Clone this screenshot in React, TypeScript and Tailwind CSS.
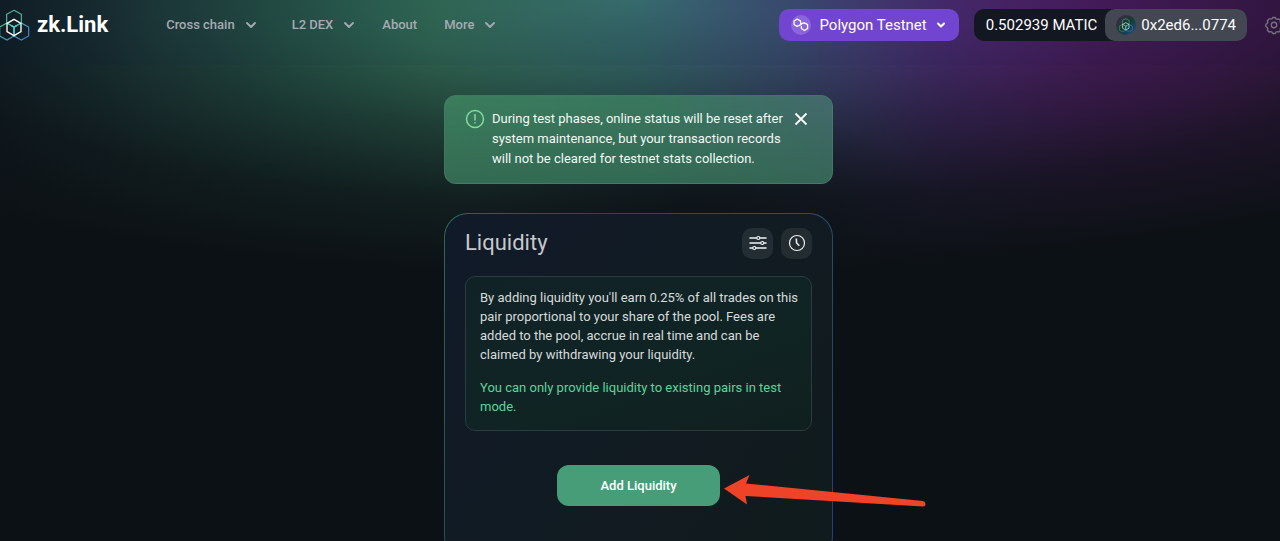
import type { ReactNode } from 'react';
import { ChevronDown } from 'lucide-react';

function LogoMark({ className }: { className: string }) {
  return (
    <svg className={className} viewBox="-3 27 93 97" fill="none" strokeWidth="3.5" aria-hidden="true">
      <defs>
        <linearGradient id="mark" x1="0" y1="30" x2="60" y2="122" gradientUnits="userSpaceOnUse">
          <stop offset="0" stopColor="#4fc08d" />
          <stop offset="0.55" stopColor="#49b99a" />
          <stop offset="1" stopColor="#3f7fd0" />
        </linearGradient>
      </defs>
      <path d="M42 31 64 43V69L42 81 20 69V43Z" stroke="url(#mark)" />
      <path d="M21 69 42 81V108L21 120-1 108V81Z" stroke="url(#mark)" />
      <path d="M64 69 86 81V108L64 120 42 108V81Z" stroke="url(#mark)" />
      <path d="M42 58 63 70V95L42 107 21 95V70Z" stroke="#fff" strokeWidth="4" />
      <path d="M42 103V82L33 76M42 82 51 76" stroke="#4fd0c0" strokeWidth="4" />
    </svg>
  );
}

function PolygonIcon() {
  return (
    <span className="flex size-5 items-center justify-center rounded-full bg-[#8c65dc]">
      <svg viewBox="65 57 46 40" className="w-4" fill="none" stroke="#fff" strokeWidth="3.6" strokeLinejoin="round" aria-hidden="true">
        <path d="M91 73 87 75V66L77 60 68 66V76L77 81 82 79 93 72 98 71 107 76V87L98 93 89 87V79" />
      </svg>
    </span>
  );
}

function GearIcon() {
  return (
    <svg viewBox="0 0 24 24" className="size-5 shrink-0" fill="none" stroke="#77727f" strokeWidth="1.6" strokeLinejoin="round" aria-hidden="true">
      <circle cx="12" cy="12" r="3.3" />
      <path d="M8 4.700 9.600 4.600 10.400 3h3.200l.8 1.600 1.600.7 1.800-.6 2.200 2.200-.6 1.800.7 1.600 1.700.8v2.900l-1.700.8-.7 1.700.6 1.700-2.200 2.300-1.800-.6-1.600.6-.8 1.700h-3.200l-.8-1.700-1.600-.6-1.800.6L4 18.200l.6-1.700-.7-1.700-1.700-.8v-2.900l1.700-.8.7-1.600L4 6.900l2.200-2.200Z" />
    </svg>
  );
}

function NavItem({ children, menu = true }: { children: ReactNode; menu?: boolean }) {
  const style = 'flex items-center gap-2 text-[13px] leading-5 font-medium text-[#a7aab3]';
  if (!menu) {
    return <a href="#about" className={style}>{children}</a>;
  }
  return (
    <button type="button" className={style}>
      {children}
      <ChevronDown className="size-4" strokeWidth={2.75} aria-hidden="true" />
    </button>
  );
}

function Header() {
  return (
    <header className="flex items-start justify-between bg-[#141450]/5 pt-[9px] pb-6">
      <div className="flex h-8 items-center">
        <a href="#home" className="flex items-center gap-[7px] text-[22px] leading-8 font-bold text-white">
          <LogoMark className="-ml-px w-[31px]" />
          zk.Link
        </a>
        <nav className="ml-[58px] flex items-center">
          <NavItem>Cross chain</NavItem>
          <span className="w-[33px]" />
          <NavItem>L2 DEX</NavItem>
          <span className="w-[25px]" />
          <NavItem menu={false}>About</NavItem>
          <span className="w-[27px]" />
          <NavItem>More</NavItem>
        </nav>
      </div>
      <div className="-mr-1 flex h-8 items-center text-[15px] text-white">
        <button type="button" className="flex h-8 items-center gap-2 rounded-[10px] bg-[#7145cf] px-3">
          <PolygonIcon />
          Polygon Testnet
          <ChevronDown className="size-3" strokeWidth={4} aria-hidden="true" />
        </button>
        <div className="ml-[15px] flex h-8 items-center rounded-[10px] bg-[#131721] pl-3">
          0.502939 MATIC
          <button type="button" className="ml-2 flex h-8 items-center gap-[5px] rounded-[10px] bg-[#424751] px-[11px]">
            <span className="flex size-5 items-center justify-center rounded-full bg-linear-to-br from-[#401f50] via-[#123c2f] to-[#24479b]">
              <LogoMark className="w-[14px]" />
            </span>
            0x2ed6...0774
          </button>
        </div>
        <button type="button" aria-label="Settings" className="ml-[17px]">
          <GearIcon />
        </button>
      </div>
    </header>
  );
}

function Notice() {
  return (
    <section className="flex w-full items-start rounded-xl border border-[#48806b]/60 bg-[linear-gradient(180deg,rgba(49,101,79,0),#31654f_130%),linear-gradient(90deg,#3b7d5c_0%,#39775f_55%,#43696c_100%)] px-5 pt-3 pb-[14px]">
      <svg viewBox="0 0 20 20" className="mt-px size-5 shrink-0" fill="none" stroke="#7fdd9b" strokeWidth="1.5" strokeLinecap="round" aria-hidden="true">
        <circle cx="10" cy="10" r="8.500" />
        <path d="M10 5.500v5.500M10 13.800v.2" />
      </svg>
      <p className="ml-[7px] flex-1 pt-px text-[13px] leading-5 text-[#f3f8f5]">
        During test phases, online status will be reset after system maintenance, but your transaction records will not be
        cleared for testnet stats collection.
      </p>
      <button type="button" aria-label="Close" className="mt-1 mr-1 ml-2 shrink-0">
        <svg viewBox="0 0 14 14" className="size-[14px]" stroke="#fff" strokeWidth="1.800" aria-hidden="true">
          <path d="M1.500 1.500l11 11M12.500 1.500l-11 11" />
        </svg>
      </button>
    </section>
  );
}

function SlidersIcon() {
  return (
    <svg viewBox="0 0 18 16" className="w-[18px]" fill="#263138" stroke="#f0f2f2" strokeWidth="1.200" strokeLinecap="round" aria-hidden="true">
      <path d="M1 3h16M1 8h16M1 13h16" strokeWidth="1.500" />
      <circle cx="9.300" cy="3" r="1.500" />
      <circle cx="13.300" cy="8" r="1.500" />
      <circle cx="5.300" cy="13" r="1.500" />
    </svg>
  );
}

function ClockIcon() {
  return (
    <svg viewBox="0 0 18 18" className="w-[18px]" fill="none" stroke="#eceeee" strokeWidth="1.200" aria-hidden="true">
      <circle cx="9" cy="9" r="7.500" />
      <path d="M8.300 4.500 8.600 9l2.700 2.800" strokeWidth="1.600" />
    </svg>
  );
}

function Arrow() {
  return (
    <svg viewBox="0 0 204 34" className="absolute top-[8px] left-full ml-1 w-[204px] max-w-none" fill="#ee4326" aria-hidden="true">
      <path d="M0 15.500 25.500 2 22 10.500 199 28Q201.500 28.500 201.500 31T199 33.500L21.500 23 23 31.500Z" />
    </svg>
  );
}

function LiquidityCard() {
  return (
    <section className="mt-[29px] w-full rounded-3xl bg-[linear-gradient(110deg,#2c6a51_0%,#23494f_30%,#294f70_65%,#233f78_100%)] p-px">
      <div className="rounded-[23px] bg-[linear-gradient(125deg,#111a29_0%,#111b23_45%,#101b1c_100%)] px-5 pb-[54px]">
        <div className="flex items-center gap-2 pt-[13px]">
          <h1 className="flex-1 text-[22px] leading-8 text-[#c7c9cb]">Liquidity</h1>
          <button type="button" aria-label="Transaction settings" className="flex size-[31px] items-center justify-center rounded-[10px] bg-[#232d34]">
            <SlidersIcon />
          </button>
          <button type="button" aria-label="History" className="flex size-[31px] items-center justify-center rounded-[10px] bg-[#232d31]">
            <ClockIcon />
          </button>
        </div>
        <div className="mt-[17px] rounded-[10px] border border-[#2b3b3e] bg-[linear-gradient(160deg,#112226,#102424_60%,#101f1e)] pt-[11px] pr-2 pb-[14px] pl-[14px] text-[13px] leading-[19px]">
          <p className="text-[#d7dbdb]">
            By adding liquidity you'll earn 0.25% of all trades on this pair proportional to your share of the pool. Fees are
            added to the pool, accrue in real time and can be claimed by withdrawing your liquidity.
          </p>
          <p className="mt-[14px] text-[#5fd39b]">You can only provide liquidity to existing pairs in test mode.</p>
        </div>
        <div className="relative mx-auto mt-[34px] w-[163px]">
          <button type="button" className="h-[41px] w-full rounded-xl bg-[#489d79] text-[13px] font-medium text-white">
            Add Liquidity
          </button>
          <Arrow />
        </div>
      </div>
    </section>
  );
}

export default function App() {
  return (
    <div className="min-h-screen overflow-hidden bg-[radial-gradient(ellipse_240px_110px_at_55%_215px,rgba(12,17,21,0.7),rgba(12,17,21,0.35)_55%,rgba(12,17,21,0)),radial-gradient(ellipse_1050px_275px_at_50%_0px,rgba(12,17,21,0),rgba(12,17,21,0.25)_25%,rgba(12,17,21,0.6)_50%,rgba(12,17,21,0.88)_75%,#0c1115_100%),linear-gradient(90deg,#1b3f4a_0%,#30675f_12%,#327560_23%,#3a7e62_34%,#386f70_50%,#42567f_62%,#603592_74%,#82269f_86%,#9826b0_100%)] font-['Roboto',sans-serif]">
      <Header />
      <main className="mx-auto flex max-w-[392px] flex-col pt-[30px] pr-[3px] pb-10">
        <Notice />
        <LiquidityCard />
      </main>
    </div>
  );
}
